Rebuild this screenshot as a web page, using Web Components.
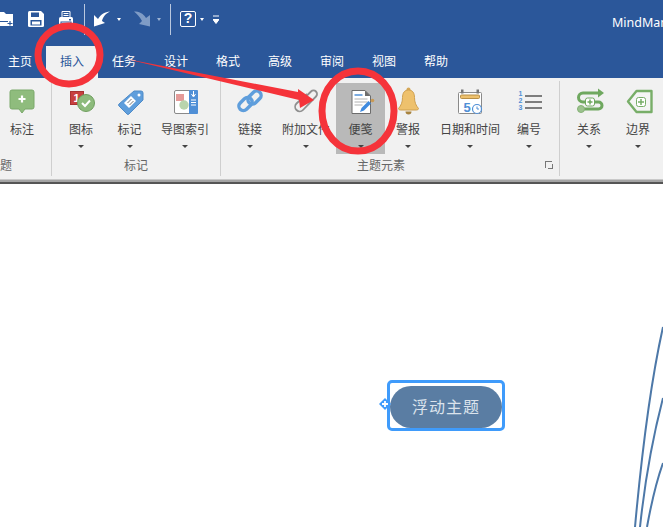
<!DOCTYPE html>
<html>
<head>
<meta charset="utf-8">
<title>MindManager</title>
<style>
  html, body { margin: 0; height: 100%; overflow: hidden; background: #fff; }
  body { font-family: "Noto Sans CJK SC", "Noto Sans", sans-serif; font-size: 12px; }
  mm-app svg { display: block; flex: none; }
</style>
</head>
<body>
<mm-app>
  <mm-titlebar>
    <svg style="margin-left:-4px" width="18" height="16" viewBox="0 0 18 16"><path d="M1 1h7l2 2h7v12H1z" fill="#fff"/><path d="M2 10.500h10M14 10v4.500M11.500 12.500h5" stroke="#2b579a" stroke-width="1.200" fill="none"/></svg>
    <svg style="margin-left:14px" width="16" height="16" viewBox="0 0 16 16"><path d="M0 1.500Q0 0 1.500 0H13l3 3v11.500Q16 16 14.500 16h-13Q0 16 0 14.500z" fill="#fff"/><rect x="3" y="1.500" width="8" height="4.500" fill="#2b579a"/><rect x="2.500" y="9" width="11" height="5.500" fill="#2b579a"/><rect x="4" y="10.500" width="8" height="3" fill="#fff"/></svg>
    <svg style="margin-left:14px" width="16" height="16" viewBox="0 0 16 16"><path d="M4 .500h8v6H4z" fill="#2b579a" stroke="#fff"/><path d="M5.500 2.500h5M5.500 4.500h5" stroke="#fff"/><path d="M1 7.500Q1 6 2.500 6h11Q15 6 15 7.500V13H1z" fill="#fff"/><rect x="3" y="11" width="10" height="5" fill="#fff" stroke="#2b579a"/><rect x="11" y="8" width="2" height="1.500" fill="#2b579a"/></svg>
    <i class="sep" style="margin-left:10px"></i>
    <svg style="margin-left:8px" width="17" height="16" viewBox="0 0 17 16"><path d="M1 15.500V4l4 4C8 3 12 1 17 .500 12 3 10 6 9 10l3 2z" fill="#fff"/></svg>
    <i class="car" style="margin-left:7px"></i>
    <svg style="margin-left:13px" width="17" height="16" viewBox="0 0 17 16"><path d="M0 .500C5 .500 9 2 12 7l4-3v11.500L5 13l3-3C6 6 3 3 0 .500z" fill="#7f9cc6"/></svg>
    <i class="car dim" style="margin-left:6px"></i>
    <i class="sep" style="margin-left:9px"></i>
    <mm-help style="margin-left:9px">?</mm-help>
    <i class="car" style="margin-left:4px"></i>
    <svg style="margin-left:9px" width="6" height="9" viewBox="0 0 6 9"><path d="M0 1h6M0 4.500h6L3 8.500z" stroke="#fff" fill="#fff"/></svg>
    <span slot="title">MindManager</span>
  </mm-titlebar>

  <mm-tabs>
    <mm-tab>主页</mm-tab>
    <mm-tab active>插入</mm-tab>
    <mm-tab>任务</mm-tab>
    <mm-tab>设计</mm-tab>
    <mm-tab>格式</mm-tab>
    <mm-tab>高级</mm-tab>
    <mm-tab>审阅</mm-tab>
    <mm-tab>视图</mm-tab>
    <mm-tab>帮助</mm-tab>
  </mm-tabs>

  <mm-ribbon>
    <mm-group label="主题" style="width:103px;margin-left:-51px;justify-content:flex-end">
      <mm-btn style="width:58px" nocaret>标注
        <svg slot="icon" width="32" height="30" viewBox="0 0 32 30"><path d="M6 4h20q2 0 2 2v15q0 2-2 2h-7l-3 4-3-4H6q-2 0-2-2V6q0-2 2-2z" fill="#8fbc7d" stroke="#7aa96a"/><path d="M16 9.500v7M12.500 13h7" stroke="#fff" stroke-width="2.200"/></svg>
      </mm-btn>
    </mm-group>

    <mm-group label="标记" style="width:169px;padding-left:5px">
      <mm-btn style="width:48px">图标
        <svg slot="icon" width="32" height="30" viewBox="0 0 32 30"><rect x="5.500" y="5.500" width="13" height="13" fill="#c8403f" stroke="#a83232"/><text x="8.500" y="15.500" font-family="Liberation Sans" font-size="11" font-weight="700" fill="#fff">1</text><circle cx="21" cy="17" r="8.500" fill="#8dbb7c" stroke="#6f9f5e"/><path d="M17 17l3 3 5-5.500" stroke="#fff" stroke-width="2" fill="none"/></svg>
      </mm-btn>
      <mm-btn style="width:49px">标记
        <svg slot="icon" width="32" height="30" viewBox="0 0 32 30"><path d="M20 5h7q2 0 2 2v7L15 28q-1 1-2 0l-8-8q-1-1 0-2z" fill="#5f9edc" stroke="#4f8bc8"/><circle cx="25" cy="9" r="1.500" fill="#fff"/><path d="M17 10l5 5-7 7-5-5z" fill="#fff"/><path d="M13.500 17l4-4M15.500 19l4-4" stroke="#777"/></svg>
      </mm-btn>
      <mm-btn style="width:62px">导图索引
        <svg slot="icon" width="32" height="30" viewBox="0 0 32 30"><rect x="5.500" y="4.500" width="23" height="23" rx="1.500" fill="#fff" stroke="#8a8a8a"/><path d="M20 4h8q1 0 1 1v22q0 1-1 1h-8z" fill="#4f8fd6"/><rect x="7" y="8" width="8" height="7" fill="#e49a98"/><circle cx="15" cy="19" r="4.700" fill="#b9d4ac"/><path d="M24.500 5v5M22.500 8l2 3 2-3M22 14h5M22 16.500h5M22 19h5" stroke="#fff" fill="none"/></svg>
      </mm-btn>
    </mm-group>

    <mm-group label="主题元素" launcher style="width:339px;padding-left:3px">
      <mm-btn style="width:52px">链接
        <svg slot="icon" width="32" height="30" viewBox="0 0 32 30"><g fill="none" stroke="#5f9edc" stroke-width="3.400"><rect x="4" y="13.500" width="15" height="9" rx="4.500" transform="rotate(-45 11.500 18)"/><rect x="13" y="7" width="15" height="9" rx="4.500" transform="rotate(-45 20.500 11.500)"/></g></svg>
      </mm-btn>
      <mm-btn style="width:60px">附加文件
        <svg slot="icon" width="32" height="30" viewBox="0 0 32 30"><path d="M12 14.500l9-9a3.500 3.500 0 0 1 5 5L13 24a4.500 4.500 0 0 1-6.500-6.500L17 8" fill="none" stroke="#8f8f8f" stroke-width="1.800"/></svg>
      </mm-btn>
      <mm-btn style="width:49px" active>便笺
        <svg slot="icon" width="32" height="30" viewBox="0 0 32 30"><path d="M7 4.500h13l5.500 5.500v17.500H7z" fill="#fff" stroke="#6c6c6c"/><path d="M20 4.500V10h5.500z" fill="#6c6c6c"/><path d="M9.500 9h8" stroke="#4f8fd6" stroke-width="1.500"/><path d="M9.500 13h13M9.500 16h13M9.500 19h8" stroke="#b0b0b0"/><path d="M15 26l1.500-4 7-7 2.500 2.500-7 7z" fill="#3f8adf"/><circle cx="27.500" cy="14.500" r="1.800" fill="#c99a55"/></svg>
      </mm-btn>
      <mm-btn style="width:46px">警报
        <svg slot="icon" width="32" height="30" viewBox="0 0 32 30"><circle cx="16.500" cy="3.500" r="2" fill="#d6a95a"/><path d="M16.500 4c-4 0-6 3-6 7.500 0 5-1.500 8-4 11 0 1 1 1.500 2 1.500h16c1 0 2-.5 2-1.500-2.500-3-4-6-4-11 0-4.500-2-7.500-6-7.500z" fill="#eec16d" stroke="#cfa050"/><path d="M13.500 25.500a3 3 0 0 0 6 0z" fill="#a8833f"/></svg>
      </mm-btn>
      <mm-btn style="width:78px">日期和时间
        <svg slot="icon" width="32" height="30" viewBox="0 0 32 30"><rect x="4.500" y="6.500" width="23" height="21" rx="1" fill="#fff" stroke="#8a8a8a"/><rect x="7" y="3.500" width="2.500" height="4" fill="#777"/><rect x="22.500" y="3.500" width="2.500" height="4" fill="#777"/><rect x="6.500" y="9" width="19" height="3.500" rx="1" fill="#eec16d" stroke="#b88f46"/><text x="9.500" y="26" font-family="Liberation Sans" font-size="13" font-weight="700" fill="#4f8fd6">5</text><circle cx="23" cy="23" r="4.500" fill="#fff" stroke="#4f8fd6" stroke-width="1.200"/><path d="M23 20.500V23h2" stroke="#4f8fd6" fill="none"/></svg>
      </mm-btn>
      <mm-btn style="width:40px">编号
        <svg slot="icon" width="32" height="30" viewBox="0 0 32 30"><g font-family="Liberation Sans" font-size="7" font-weight="700" fill="#4f8fd6"><text x="5.500" y="9.500">1</text><text x="5.500" y="16.500">2</text><text x="5.500" y="23.500">3</text></g><path d="M12 10h17M12 16h17M12 22h17" stroke="#7d7d7d" stroke-width="2"/></svg>
      </mm-btn>
    </mm-group>

    <mm-group style="width:120px">
      <mm-btn style="width:58px">关系
        <svg slot="icon" width="32" height="30" viewBox="0 0 32 30"><path d="M26 7H10a4.500 4.500 0 0 0 0 9h15.500a3.500 3.500 0 0 1 0 7H9" fill="none" stroke="#6fa85f" stroke-width="3"/><path d="M25 2.500l6 4.500-6 4.500z" fill="#6fa85f"/><circle cx="8" cy="23" r="3.500" fill="#9cc28e" stroke="#86b277"/><rect x="12.500" y="12" width="9" height="8" rx="2" fill="#fff" stroke="#6fa85f"/><path d="M17 13.500v5M14.500 16h5" stroke="#6fa85f" stroke-width="1.500"/></svg>
      </mm-btn>
      <mm-btn style="width:40px">边界
        <svg slot="icon" width="32" height="30" viewBox="0 0 32 30"><path d="M6 15.500 14.500 5H29.500V26H14.500z" fill="#f5f5f5" stroke="#78ae68" stroke-width="2.400" stroke-linejoin="round"/><rect x="14.500" y="11.500" width="9" height="9" rx="2" fill="#fff" stroke="#78ae68"/><path d="M19 13v6M16 16h6" stroke="#78ae68" stroke-width="1.500"/></svg>
      </mm-btn>
    </mm-group>
  </mm-ribbon>

  <mm-canvas>
    <mm-float-topic>浮动主题</mm-float-topic>
  </mm-canvas>

  <mm-marks></mm-marks>
</mm-app>

<template id="mm-titlebar-tpl">
  <style>
    :host { display: flex; align-items: center; height: 46px; box-sizing: border-box; padding-bottom: 8px; background: #2b579a; color: #fff; }
    ::slotted(.sep) { display: block; width: 1px; height: 31px; background: #b9c8df; flex: none; }
    ::slotted(.car) { display: block; flex: none; width: 0; height: 0; border: 2.500px solid transparent; border-top: 3px solid #fff; border-bottom: 0; }
    ::slotted(.car.dim) { border-top-color: #9db3d4; }
    .title { margin-left: auto; width: 51px; overflow: hidden; white-space: nowrap; font: 12.500px "Noto Sans", sans-serif; padding-top: 7px; }
  </style>
  <slot></slot>
  <div class="title"><slot name="title"></slot></div>
</template>

<template id="mm-help-tpl">
  <style>
    :host { display: block; flex: none; box-sizing: border-box; width: 16px; height: 16px; border: 1.500px solid #fff; border-radius: 2px; color: #fff; text-align: center; font: 700 14px/13px "Liberation Sans", sans-serif; }
  </style>
  <slot></slot>
</template>

<template id="mm-tabs-tpl">
  <style>
    :host { display: flex; height: 32px; margin-left: -6px; background: #2b579a; }
    :host { width: calc(100% + 6px); }
  </style>
  <slot></slot>
</template>

<template id="mm-tab-tpl">
  <style>
    :host { display: block; width: 52px; box-sizing: border-box; text-align: center; color: #fff; line-height: 30px; }
    :host([active]) { background: #f1f1f1; color: #2b579a; }
  </style>
  <slot></slot>
</template>

<template id="mm-ribbon-tpl">
  <style>
    :host { display: flex; flex-direction: column; height: 106px; background: #f1f1f1; }
    .row { display: flex; flex: 1; overflow: hidden; }
    .edge { height: 5px; background: linear-gradient(#c9c9c9 0 1px, #a4a4a4 1px 3px, #555 3px); }
  </style>
  <div class="row"><slot></slot></div>
  <div class="edge"></div>
</template>

<template id="mm-group-tpl">
  <style>
    :host { display: flex; position: relative; box-sizing: border-box; flex: none; height: 95px; margin-top: 3px; border-right: 1px solid #cfcfcf; padding-top: 2px; align-items: flex-start; }
    .label { position: absolute; left: 0; right: 0; top: 76px; text-align: center; color: #666; line-height: 16px; white-space: nowrap; }
    :host([launcher]) .label { padding-right: 18px; }
    .launch { display: none; position: absolute; right: 7px; top: 80px; width: 6px; height: 6px; border-left: 1px solid #777; border-top: 1px solid #777; }
    .launch::after { content: ""; position: absolute; left: 2px; top: 2px; width: 4px; height: 4px; border-right: 1px solid #777; border-bottom: 1px solid #777; }
    :host([launcher]) .launch { display: block; }
  </style>
  <slot></slot>
  <div class="label"></div>
  <div class="launch"></div>
</template>

<template id="mm-btn-tpl">
  <style>
    :host { display: flex; flex-direction: column; align-items: center; flex: none; box-sizing: border-box; height: 71px; padding-top: 3px; color: #444; white-space: nowrap; }
    :host([active]) { background: #b9b9b9; }
    .text { height: 18px; margin-top: 4px; line-height: 18px; font-size: 12px; }
    .caret { margin-top: 7px; width: 0; height: 0; border: 3px solid transparent; border-top: 3px solid #444; border-bottom: 0; }
    :host([nocaret]) .caret { display: none; }
  </style>
  <slot name="icon"></slot>
  <div class="text"><slot></slot></div>
  <div class="caret"></div>
</template>

<template id="mm-canvas-tpl">
  <style>
    :host { display: block; position: relative; height: 343px; background: #fff; overflow: hidden; }
    svg { position: absolute; left: 0; top: 0; }
  </style>
  <svg width="663" height="343" viewBox="0 184 663 343" fill="none" stroke="#4d78a8" stroke-width="2">
    <path d="M663 327C650 385 642 450 635 527"/>
    <path d="M663 398C652 440 645 480 640 527"/>
    <path d="M663 463C655 485 651 505 647 527"/>
  </svg>
  <slot></slot>
</template>

<template id="mm-float-topic-tpl">
  <style>
    :host { position: absolute; left: 387px; top: 196px; box-sizing: border-box; width: 118px; height: 51px; border: 3px solid #3f9bfb; border-radius: 5px; padding-top: 3px; }
    .pill { width: 112px; height: 42px; border-radius: 21px; background: #5a7da3; color: #dbe3ec; font-size: 16px; letter-spacing: 1px; text-align: center; line-height: 41px; }
    .handle { position: absolute; left: -11px; top: 15px; width: 12px; height: 12px; }
  </style>
  <svg class="handle" viewBox="0 0 12 12"><path d="M6 0 12 6 6 12 0 6z" fill="#3f9bfb"/><path d="M6 3v6M3 6h6" stroke="#fff" stroke-width="1.800"/></svg>
  <div class="pill"><slot></slot></div>
</template>

<template id="mm-marks-tpl">
  <style>
    :host { position: absolute; left: 0; top: 0; width: 663px; height: 527px; pointer-events: none; }
  </style>
  <svg width="663" height="527" viewBox="0 0 663 527" fill="none">
    <ellipse cx="69" cy="55" rx="31" ry="29" stroke="#f5333a" stroke-width="7"/>
    <ellipse cx="358" cy="111" rx="36" ry="40" stroke="#f5333a" stroke-width="7"/>
    <path d="M124 58.500 298 92 298 89 314 100 300 108 299 100z" fill="#f5333a"/>
  </svg>
</template>

<script>
// every element is just a template clone, mm-group also copies its label
function define(tag, extra) {
  customElements.define(tag, class extends HTMLElement {
    constructor() {
      super();
      this.attachShadow({ mode: 'open' });
      this.shadowRoot.appendChild(document.getElementById(tag + '-tpl').content.cloneNode(true));
    }
    connectedCallback() {
      if (extra) extra.call(this);
    }
  });
}

define('mm-titlebar');
define('mm-help');
define('mm-tabs');
define('mm-tab');
define('mm-ribbon');
define('mm-group', function () {
  this.shadowRoot.querySelector('.label').textContent = this.getAttribute('label') || '';
});
define('mm-btn');
define('mm-canvas');
define('mm-float-topic');
define('mm-marks');

customElements.define('mm-app', class extends HTMLElement {
  constructor() {
    super();
    this.attachShadow({ mode: 'open' });
    this.shadowRoot.innerHTML = '<style>:host{display:block;position:relative;width:663px;height:527px;overflow:hidden}</style><slot></slot>';
  }
});
</script>
</body>
</html>
